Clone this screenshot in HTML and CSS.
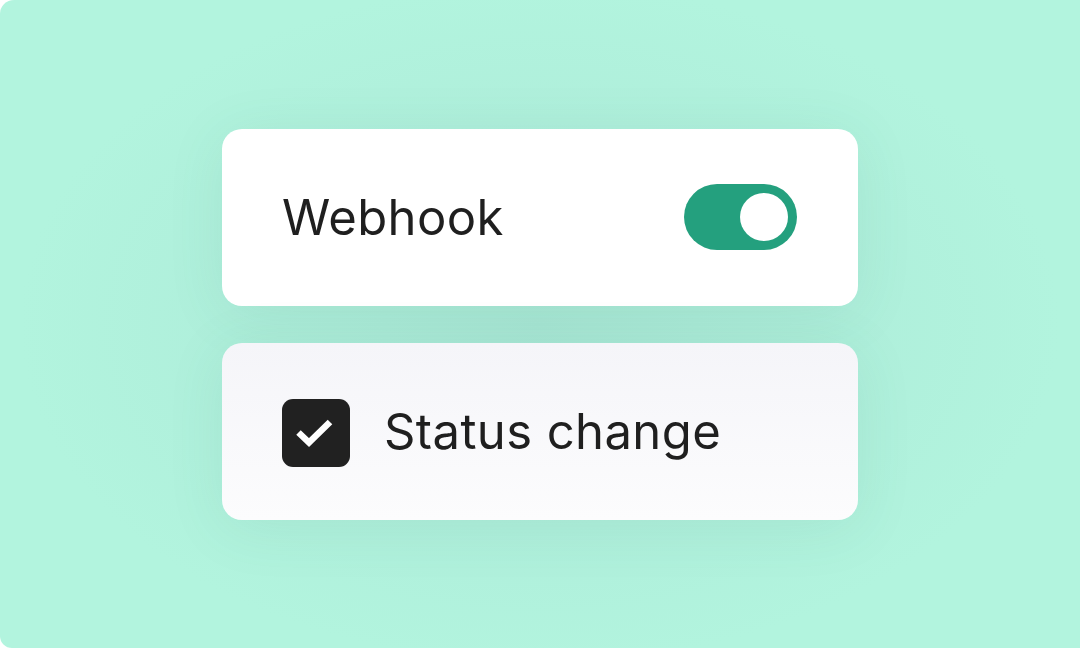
FILE: index.html
```html
<!DOCTYPE html>
<html lang="en">
<head>
    <meta charset="UTF-8">
    <meta name="viewport" content="width=device-width, initial-scale=1.0">
    <title>Webhook</title>
    <link rel="stylesheet" href="styles.css">
</head>
<body>
    <div class="canvas">
        <div class="stack">
            <!-- Webhook on/off -->
            <div class="card">
                <span class="label">Webhook</span>
                <div class="toggle on"><span class="knob"></span></div>
            </div>

            <!-- Trigger event -->
            <div class="card card-muted">
                <span class="checkbox">
                    <svg width="68" height="68" viewBox="0 0 68 68"><path d="M16.5 33.5l10.5 10 21-20.5" fill="none" stroke="#fff" stroke-width="6.5" stroke-linecap="butt" stroke-linejoin="miter"/></svg>
                </span>
                <span class="label">Status change</span>
            </div>
        </div>
    </div>
</body>
</html>
```

FILE: styles.css
```css
/* Base */
body { margin: 0; background: #ffffff; font-family: Inter, "Noto Sans", sans-serif; }
.canvas { width: 1080px; height: 648px; display: flex; align-items: center; justify-content: center; border-radius: 14px 0 0 12px; background: radial-gradient(ellipse 520px 340px at 540px 324px, #a9e7d5 0%, #afefdb 60%, #b2f4de 100%); }

/* Cards */
.stack { display: flex; flex-direction: column; gap: 37px; }
.card { width: 636px; height: 177px; box-sizing: border-box; padding: 0 61px 0 60px; display: flex; align-items: center; justify-content: space-between; background: #ffffff; border-radius: 20px; box-shadow: 0 8px 60px rgba(40, 120, 95, 0.09); }
.card-muted { justify-content: flex-start; gap: 34px; background: linear-gradient(180deg, #f5f5f9 0%, #fcfcfd 100%); }
.label { font-size: 49px; color: #1f1f1f; letter-spacing: 0.4px; }

/* Toggle */
.toggle { width: 113px; height: 66px; border-radius: 33px; background: #24a07e; display: flex; align-items: center; justify-content: flex-end; padding: 0 9px; box-sizing: border-box; }
.knob { width: 48px; height: 48px; border-radius: 50%; background: #ffffff; }

/* Checkbox */
.checkbox { width: 68px; height: 68px; margin-top: 3px; border-radius: 11px; background: #212121; display: flex; align-items: center; justify-content: center; }
.checkbox svg { display: block; }
```
